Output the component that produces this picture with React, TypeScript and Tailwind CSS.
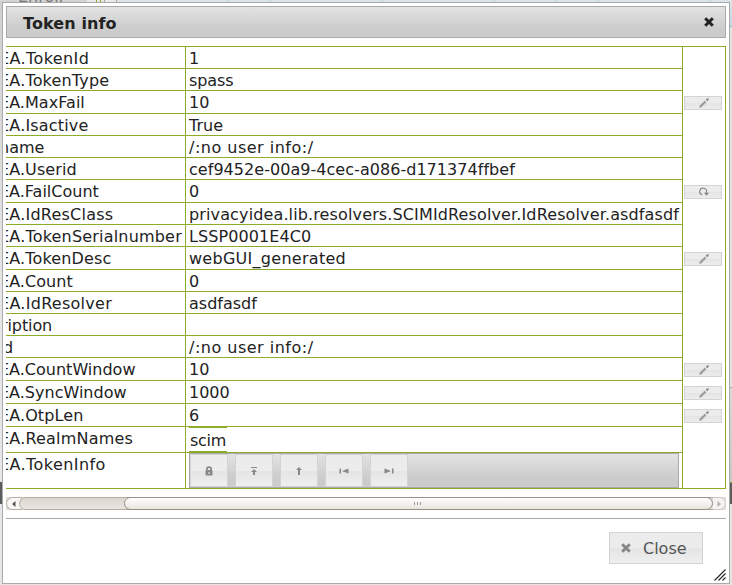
import React from "react";

type Action = "edit" | "reset";
interface Row {
  label: string;
  fit: string;
  value: string;
  valueFit?: string;
  h: string;
  action?: Action;
}

const rows: Row[] = [
  { label: "EA.TokenId", fit: "-ml-[7px] tracking-[0.4px]", value: "1", h: "h-[22px]" },
  { label: "EA.TokenType", fit: "-ml-[7px] tracking-[0.18px]", value: "spass", valueFit: "tracking-[-0.1px]", h: "h-[22px]" },
  { label: "EA.MaxFail", fit: "-ml-[7px] tracking-[0.05px]", value: "10", h: "h-[23px]", action: "edit" },
  { label: "EA.Isactive", fit: "-ml-[7px] tracking-[0.18px]", value: "True", h: "h-[22px]" },
  { label: "name", fit: "-ml-[7px]", value: "/:no user info:/", valueFit: "tracking-[0.5px]", h: "h-[22px]" },
  { label: "EA.Userid", fit: "-ml-[7px] tracking-[0.08px]", value: "cef9452e-00a9-4cec-a086-d171374ffbef", valueFit: "tracking-[0.04px]", h: "h-[22px]" },
  { label: "EA.FailCount", fit: "-ml-[7px]", value: "0", h: "h-[23px]", action: "reset" },
  { label: "EA.IdResClass", fit: "-ml-[7px] tracking-[0.22px]", value: "privacyidea.lib.resolvers.SCIMIdResolver.IdResolver.asdfasdf", valueFit: "tracking-[0.13px]", h: "h-[22px]" },
  { label: "EA.TokenSerialnumber", fit: "-ml-[7px] tracking-[0.19px]", value: "LSSP0001E4C0", valueFit: "tracking-[0.08px]", h: "h-[22px]" },
  { label: "EA.TokenDesc", fit: "-ml-[7px] tracking-[0.14px]", value: "webGUI_generated", valueFit: "tracking-[0.28px]", h: "h-[23px]", action: "edit" },
  { label: "EA.Count", fit: "-ml-[7px] tracking-[0.05px]", value: "0", h: "h-[22px]" },
  { label: "EA.IdResolver", fit: "-ml-[7px] tracking-[0.28px]", value: "asdfasdf", h: "h-[22px]" },
  { label: "ription", fit: "-ml-[5px] tracking-[-0.1px]", value: "", h: "h-[22px]" },
  { label: "d", fit: "-ml-[3px]", value: "/:no user info:/", valueFit: "tracking-[0.5px]", h: "h-[22px]" },
  { label: "EA.CountWindow", fit: "-ml-[7px]", value: "10", h: "h-[23px]", action: "edit" },
  { label: "EA.SyncWindow", fit: "-ml-[7px]", value: "1000", h: "h-[23px]", action: "edit" },
  { label: "EA.OtpLen", fit: "-ml-[7px] tracking-[0.1px]", value: "6", h: "h-[23px]", action: "edit" },
];

function Pencil() {
  return (
    <svg width="10" height="10" viewBox="0 0 10 10" fill="none" stroke="#888">
      <path d="M1.8 8.2 L6.6 3.4" strokeWidth="2.4" strokeDasharray="1.2 0.4" />
      <path d="M7.2 1 L9 2.8 M7.6 2.4 L9.6 0.4" strokeWidth="1.4" />
      <path d="M0.3 9.7 L0.8 7.4 L2.6 9.2 Z" fill="#888" stroke="none" />
    </svg>
  );
}

function Reset() {
  return (
    <svg width="10" height="10" viewBox="0 0 10 10" fill="none" stroke="#888">
      <path d="M3.2 7.8 A3.4 3.4 0 1 1 7.5 5 V7" strokeWidth="1.1" />
      <path d="M5 5.8 H10 L7.5 8.7 Z" fill="#888" stroke="none" />
    </svg>
  );
}

function Cross({ color }: { color: string }) {
  return (
    <svg width="10" height="10" viewBox="0 0 10 10" stroke={color} strokeWidth="3">
      <path d="M1.2 1.2 L8.8 8.8 M8.8 1.2 L1.2 8.8" />
    </svg>
  );
}

const toolIcons = [
  <svg key="lock" width="8" height="10" viewBox="0 0 8 10"><path d="M1.9 5 V2.8 Q1.9 1.2 4 1.2 Q6.1 1.2 6.1 2.8 V5" fill="none" stroke="#888" strokeWidth="1.8" /><rect x="0.5" y="4" width="7" height="5.6" rx="1" fill="#888" /><path d="M4 6 V8" stroke="#eee" /></svg>,
  <svg key="top" width="8" height="10" viewBox="0 0 8 10" fill="#888"><path d="M1 1 H7 V2 H1 Z M4 3 L7 6 H5 V9 H3 V6 H1 Z" /></svg>,
  <svg key="up" width="8" height="10" viewBox="0 0 8 10" fill="#888"><path d="M4 1 L7 4 H5 V9 H3 V4 H1 Z" /></svg>,
  <svg key="first" width="10" height="8" viewBox="0 0 10 8" fill="#888"><path d="M0.5 1.5 H2 V6.5 H0.5 Z M9.5 1.5 V6.5 L3 4 Z" /></svg>,
  <svg key="last" width="10" height="8" viewBox="0 0 10 8" fill="#888"><path d="M8 1.5 H9.5 V6.5 H8 Z M0.5 1.5 V6.5 L7 4 Z" /></svg>,
];

function Backdrop() {
  return (
    <div className="absolute inset-0 bg-linear-to-b from-[#d0d0d0] to-[#e6e6e6] to-50%">
      <div className="flex h-[2px] overflow-hidden bg-[#dde4e8]">
        <div className="w-[87px] bg-[#d4d4d4] pl-[18px] leading-[20px] text-[#777]">
          <span className="-mt-[13px] block">Enroll</span>
        </div>
        <div className="flex w-[30px] gap-[3px] border-r border-[#aaa] bg-[#e9e9e9] pl-[9px]">
          <i className="w-px bg-[#8cab27]" />
          <i className="w-px bg-[#8cab27]" />
          <i className="w-px bg-[#aaa]" />
        </div>
        <div className="w-[112px] border-r border-[#bccfd3]" />
        <div className="w-[42px] border-r border-[#bccfd3]" />
        <div className="w-[112px] border-r border-[#bccfd3]" />
        <div className="w-[112px] border-r border-[#bccfd3]" />
        <div className="w-[62px] border-r border-[#bccfd3]" />
        <div className="w-[42px] border-r border-[#bccfd3]" />
        <div className="w-[112px] border-r border-[#bccfd3]" />
      </div>
      <div className="ml-auto h-[25px] w-[2px] border-b border-[#9cbcc8] bg-linear-to-b from-[#dde4e8] to-[#c0d8e2]" />
      <div className="ml-auto h-[360px] w-[2px] bg-[#e4e4e4]" />
      <div className="ml-auto h-[95px] w-[2px] border-t border-[#aaa] bg-linear-to-b from-[#dadada] to-[#c8c8c8]" />
      <div className="flex h-[22px] justify-between">
        <div className="w-[2px] bg-[#5c5c5c]" />
        <div className="w-[2px] border-t border-[#8cab27] bg-[#5c5c5c]" />
      </div>
    </div>
  );
}

function ScrollBar() {
  return (
    <div className="mt-[8px] flex h-[13px] shrink-0 overflow-hidden bg-[#e4dfda]">
      <div className="flex w-[16px] shrink-0 items-center justify-center rounded-l-full border border-r-0 border-[#b5aca2] bg-[#f8f7f5] pr-[2px]">
        <svg width="4" height="6" viewBox="0 0 4 6" fill="#555"><path d="M3.5 0 V6 L0 3 Z" /></svg>
      </div>
      <div className="-ml-[3px] flex flex-1 rounded-l-full border-y border-l border-[#b5aca2] bg-linear-to-b from-[#ddd6cf] to-[#e9e5e1]">
        <div className="w-[104px]" />
        <div className="-my-px flex flex-1 items-center justify-center gap-[2px] rounded-full border border-[#978f84] bg-linear-to-b from-white to-[#e8e4e0] pr-[3px]">
          <i className="h-[3px] w-px bg-[#a09a92]" />
          <i className="h-[3px] w-px bg-[#a09a92]" />
          <i className="h-[3px] w-px bg-[#a09a92]" />
        </div>
      </div>
      <div className="flex w-[13px] shrink-0 items-center justify-center rounded-r-full border border-l-0 border-[#cec6be] bg-[#f5f3f1]">
        <svg width="4" height="6" viewBox="0 0 4 6" fill="#b5b0aa"><path d="M0.5 0 V6 L4 3 Z" /></svg>
      </div>
    </div>
  );
}

export default function App() {
  return (
    <div className="relative h-[585px] w-[732px] overflow-hidden pt-[2px] pl-[2px] text-[16px] leading-[20px] text-[#222] [font-family:'DejaVu_Sans',Verdana,sans-serif]">
      <Backdrop />
      <div className="relative flex h-[582px] w-[728px] flex-col border border-[#aaa] bg-white px-[3px] pt-[3px]">
        <header className="flex h-[32px] shrink-0 items-center justify-between border border-[#aaa] bg-linear-to-b from-[#e3e3e3] via-[#cccccc] via-70% to-[#cccccc] pr-[11px] pl-[16px] font-bold">
          <h1 className="pt-[3px] tracking-[0.1px]">Token info</h1>
          <Cross color="#222" />
        </header>
        <main className="mt-[8px] flex h-[443px] shrink-0 overflow-hidden border-t border-[#8cab27]">
          <div className="w-[677px] shrink-0 border-r border-[#8cab27]">
            {rows.map((r, i) => (
              <div key={i} className={`flex ${r.h} border-b border-[#8cab27]`}>
                <div className="w-[180px] shrink-0 overflow-hidden border-r border-[#8cab27] pt-[2px] whitespace-nowrap">
                  <span className={`block ${r.fit}`}>{r.label}</span>
                </div>
                <div className={`pt-[2px] pl-[3px] whitespace-nowrap ${r.valueFit ?? ""}`}>{r.value}</div>
              </div>
            ))}
            <div className="flex h-[26px] border-b border-[#8cab27]">
              <div className="w-[180px] shrink-0 overflow-hidden border-r border-[#8cab27] pt-[2px]">
                <span className="-ml-[7px] block tracking-[0.2px]">EA.RealmNames</span>
              </div>
              <div className="ml-[3px] h-[25px] w-[38px] border-y border-[#8cab27] pt-[3px] pl-px tracking-[-0.3px]">scim</div>
            </div>
            <div className="flex h-[36px] border-b border-[#8cab27]">
              <div className="w-[180px] shrink-0 overflow-hidden border-r border-[#8cab27] pt-[2px]">
                <span className="-ml-[7px] block tracking-[0.42px]">EA.TokenInfo</span>
              </div>
              <div className="ml-[3px] flex h-[35px] w-[490px] gap-[7px] border border-[#aaa] bg-linear-to-b from-[#e3e3e3] via-[#cccccc] via-70% to-[#cccccc]">
                {toolIcons.map((icon, i) => (
                  <div key={i} className="flex h-[33px] w-[38px] items-center justify-center border border-[#d3d3d3] bg-linear-to-b from-[#ececec] from-50% via-[#e4e4e4] via-50% to-[#efefef]">
                    {icon}
                  </div>
                ))}
              </div>
            </div>
          </div>
          <div className="flex-1 border-r border-b border-[#8cab27]">
            {rows.map((r, i) => (
              <div key={i} className={`${r.h} pt-[5px] pl-px`}>
                {r.action && (
                  <div className="flex h-[14px] w-[38px] items-center justify-center border border-[#d3d3d3] bg-linear-to-b from-[#ececec] from-50% via-[#e4e4e4] via-50% to-[#ededed] pl-px">
                    {r.action === "edit" ? <Pencil /> : <Reset />}
                  </div>
                )}
              </div>
            ))}
          </div>
        </main>
        <ScrollBar />
        <footer className="mt-[8px] flex justify-end border-t border-[#aaa] pt-[13px] pr-[23px]">
          <button className="flex h-[32px] w-[94px] items-center gap-[12px] border border-[#d3d3d3] bg-linear-to-b from-[#ececec] from-50% via-[#e4e4e4] via-50% to-[#efefef] pl-[11px] text-[#555]">
            <Cross color="#888" />
            <span className="pt-px">Close</span>
          </button>
        </footer>
        <svg className="absolute right-[3px] bottom-[2px]" width="12" height="12" viewBox="0 0 12 12" stroke="#222" strokeWidth="1.1">
          <path d="M0.5 11.5 L11.5 0.5 M4.5 11.5 L11.5 4.5 M8.5 11.5 L11.5 8.5" />
        </svg>
      </div>
    </div>
  );
}
